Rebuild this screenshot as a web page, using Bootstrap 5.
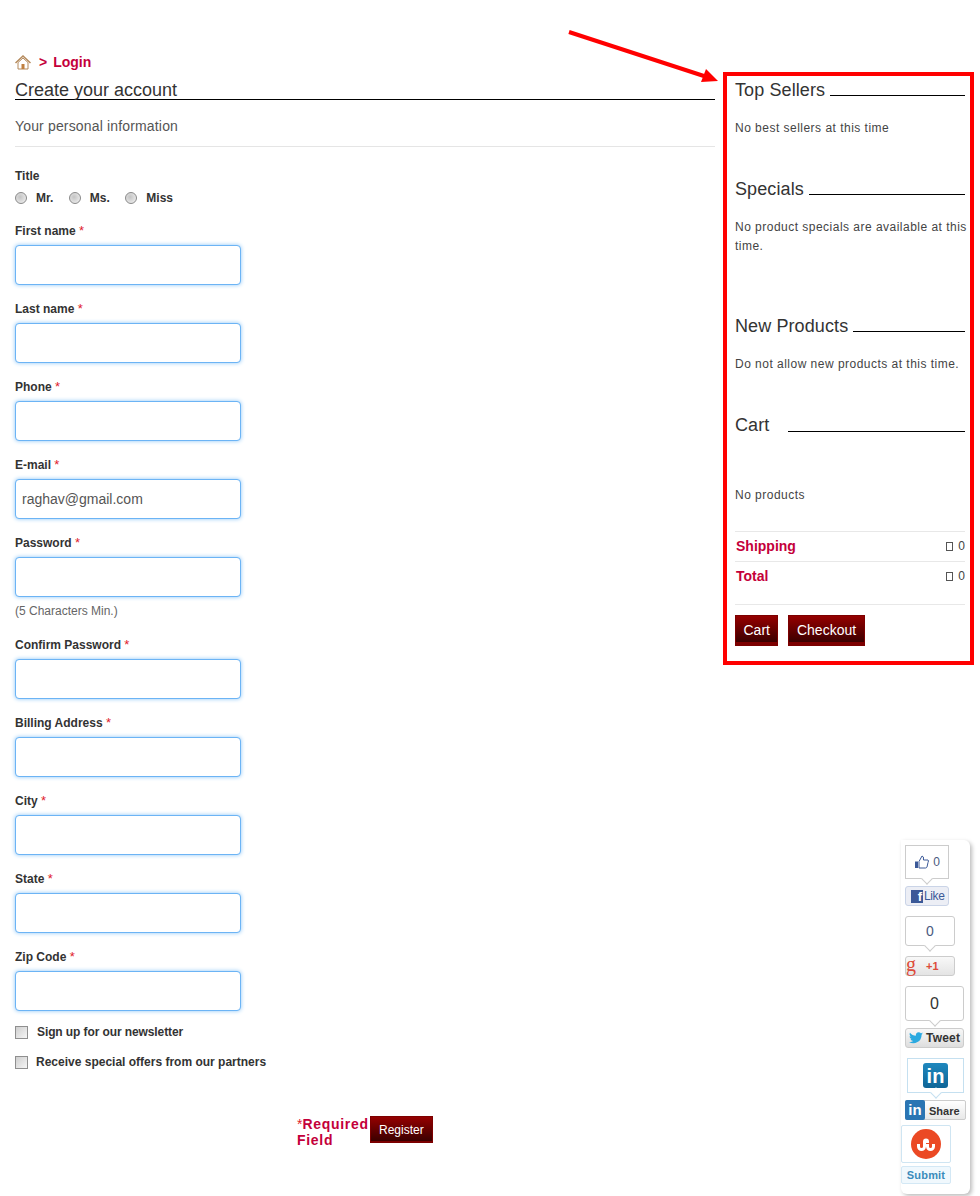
<!DOCTYPE html>
<html lang="en">
<head>
    <meta charset="UTF-8">
    <title>Create your account</title>
    <link rel="stylesheet" href="https://cdn.jsdelivr.net/npm/bootstrap@5.3.0/dist/css/bootstrap.min.css">
    <style>
        body { font-family: "Liberation Sans", Arial, sans-serif; font-size: 12px; color: #333; background: #fff; }
        .page-wrap { padding: 52px 6px 0 15px; width: 980px; }
        .main-col { width: 700px; margin-right: 8px; }

        .crumb { height: 20px; color: #c4003a; font-size: 14px; font-weight: 700; line-height: 20px; }
        .crumb svg { margin-right: 8px; }
        .crumb b { margin-right: 6px; }
        .page-title { font-size: 18px; font-weight: 400; line-height: 22px; padding-top: 7px; margin: 0; border-bottom: 1px solid #000; box-sizing: content-box; height: 20px; }
        .sub-title { font-size: 14px; font-weight: 400; letter-spacing: .16px; color: #555; line-height: 20px; margin: 0; padding: 16px 0 10px; border-bottom: 1px solid #e5e5e5; height: 47px; }

        .fld-label { display: block; font-weight: 700; font-size: 12px; line-height: 16px; padding-top: 1px; margin: 0 0 6px; color: #333; }
        .req { color: #e0202a; font-weight: 400; font-size: 13px; }
        .fld { margin-bottom: 15px; height: 63px; }
        .fld .form-control { width: 226px; height: 40px; border: 1px solid #6cb4f5; border-radius: 4px; box-shadow: 0 0 4px #8cc6f7; padding: 0 6px; font-size: 14px; color: #555; font-family: inherit; }
        .fld-hint { color: #666; font-size: 12px; line-height: 16px; margin: -16px 0 0; height: 40px; padding-top: 7px; }

        .title-row { padding-top: 21px; height: 75px; }
        .title-row .fld-label { padding-top: 0; margin-bottom: 6px; }
        .radio-line { color: #333; font-weight: 700; line-height: 16px; }
        .radio-line .form-check-input, .check-line .form-check-input { appearance: none; margin: 0; float: none; }
        .radio-line .form-check-input { width: 12px; height: 12px; border-radius: 50%; border: 1px solid #8a8a8a; background: radial-gradient(circle at 40% 40%, #c4c4c4 0, #dcdcdc 50%, #f6f6f6 100%); }
        .radio-line label { margin: 0 15.5px 0 9px; }
        .check-line { height: 30px; font-weight: 700; line-height: 16px; }
        .check-line .form-check-input { width: 13px; height: 13px; border-radius: 0; border: 1px solid #8f8f8f; background: linear-gradient(135deg, #cfcfcf, #f6f6f6); margin-right: 8px; }
        .check-line label { margin: 0; }
        .check-first { margin-top: -9px; }
        .check-first label { padding-left: 1px; letter-spacing: -.1px; }

        .submit-line { margin-top: 39px; padding-left: 282px; }
        .req-note { width: 73px; color: #c4003a; font-size: 14px; font-weight: 700; line-height: 16px; letter-spacing: .7px; }
        .req-note i { color: #e0202a; font-style: normal; font-weight: 400; letter-spacing: 0; }

        .btn-dark-red { border: 1px solid #7c0000; border-bottom: 4px solid #7c0000; border-radius: 0; background: linear-gradient(#950000, #3a0000); color: #fff; font-size: 14px; line-height: 16px; padding: 6px 7.5px 4px; }
        .btn-dark-red:hover { color: #fff; background: #7c0000; }
        .btn-reg { font-size: 12px; padding: 5px 8px 4px; height: 27px; border-bottom-width: 2px; }

        .side-box { width: 251px; height: 593px; margin-top: 20px; border: 4px solid #f00; padding: 3px 5px 0 8px; }
        .side-h { display: flex; align-items: flex-end; font-size: 18px; font-weight: 400; letter-spacing: .1px; line-height: 22px; margin: 0; color: #333; }
        .side-h::after { content: ""; flex: 1; border-bottom: 1px solid #000; margin: 0 0 5px 5px; }
        .side-h.wide-gap::after { margin: 0 0 4px 19px; }
        .side-p { font-size: 12px; line-height: 19px; letter-spacing: .48px; color: #444; margin: 0 -4px 0 0; }
        .side-gap-1 { margin-top: 18px; }
        .side-h.side-gap-2 { margin-top: 40px; }
        .side-h.side-gap-3 { margin-top: 59px; }
        .side-p.side-gap-4 { margin-top: 50px; margin-bottom: 26px; }
        .side-actions { gap: 10px; border-top: 1px solid #e8e8e8; margin-top: 13px; padding-top: 10px; }
        .tot-row { height: 30px; border-top: 1px solid #e8e8e8; line-height: 29px; color: #444; }
        .tot-row b { color: #c4003a; font-size: 14px; padding-left: 1px; }
        .tofu { display: inline-block; width: 7px; height: 9px; border: 1px solid #555; margin-right: 5px; vertical-align: -1px; }

        .share-box { position: absolute; left: 901px; top: 840px; width: 69px; height: 354px; background: #fff; border-radius: 0 6px 6px 6px; box-shadow: 2px 2px 4px #bbb; font-family: "Liberation Sans", Arial, sans-serif; }
        .cnt { position: relative; background: #fff; border: 1px solid #ccc; color: #4a5a80; display: flex; align-items: center; justify-content: center; }
        .cnt::after { content: ""; position: absolute; left: 50%; bottom: -5px; width: 8px; height: 8px; margin-left: -4px; background: #fff; border-right: 1px solid #ccc; border-bottom: 1px solid #ccc; transform: rotate(45deg); }
        .cnt-fb { margin: 5px 0 0 4px; width: 44px; height: 34px; font-size: 12px; }
        .btn-fb { margin: 7px 0 0 4px; width: 44px; height: 20px; background: #eceef5; border: 1px solid #cad4e7; border-radius: 3px; color: #3b5998; font-size: 12px; letter-spacing: -.4px; padding-left: 5px; gap: 1px; }
        .fb-logo { flex: none; width: 12px; height: 13px; background: #3b5998; color: #fff; font-weight: 700; font-size: 13px; line-height: 14px; letter-spacing: 0; text-align: right; padding-right: 1px; }
        .cnt-g { margin: 10px 0 0 4px; width: 50px; height: 30px; border-radius: 3px; font-size: 14px; }
        .btn-g { margin: 10px 0 0 4px; width: 50px; height: 20px; border: 1px solid #ccc; border-radius: 3px; background: linear-gradient(#f8f8f8, #e4e4e4); color: #dd4b39; font-size: 11px; font-weight: 700; }
        .g-logo { font-family: "Liberation Serif", serif; font-weight: 400; font-size: 20px; line-height: 16px; width: 16px; margin-top: -4px; }
        .cnt-tw { margin: 10px 0 0 4px; width: 59px; height: 35px; border-radius: 3px; font-size: 16px; color: #333; }
        .btn-tw { margin: 7px 0 0 4px; width: 59px; height: 20px; border: 1px solid #ccc; border-radius: 3px; background: linear-gradient(#f8f8f8, #dedede); color: #333; font-size: 12px; letter-spacing: .2px; font-weight: 700; gap: 3px; padding-left: 3px; }
        .cnt-li { margin: 10px 0 0 6px; width: 57px; height: 35px; border-color: #c5e0f0; }
        .cnt-li::after { border-color: #c5e0f0; }
        .li-logo { width: 25px; height: 25px; border-radius: 3px; background: linear-gradient(#1f88be, #0e6597); color: #fff; font-weight: 700; font-size: 20px; line-height: 26px; text-align: center; }
        .btn-li { margin: 7px 0 0 4px; width: 61px; height: 20px; border: 1px solid #ccc; border-radius: 2px; background: linear-gradient(#fff, #e8e8e8); color: #333; font-size: 11px; font-weight: 700; padding-top: 2px; }
        .btn-li .li-logo { width: 20px; height: 20px; font-size: 15px; line-height: 20px; border-radius: 2px; margin: -3px 4px -1px -1px; background: #2a75b3; flex: none; }
        .cnt-su { margin: 5px 0 0 0; width: 50px; height: 38px; border: 1px solid #cfe5f2; border-radius: 2px; }
        .cnt-su::after { display: none; }
        .su-logo { width: 30px; height: 30px; }
        .btn-su { margin: 3px 0 0 0; width: 50px; height: 18px; border: 1px solid #d3e8f5; border-radius: 2px; background: #f0f8fd; color: #3a8bbb; font-size: 11px; font-weight: 700; justify-content: center; letter-spacing: .2px; }
        .arrow-layer { position: absolute; left: 560px; top: 20px; }
    </style>
</head>
<body>

<svg class="arrow-layer" width="170" height="70" viewBox="0 0 170 70">
    <line x1="9" y1="12" x2="150" y2="58" stroke="#f00" stroke-width="4"/>
    <polygon points="158,61 141,62 146,49" fill="#f00"/>
</svg>

<div class="page-wrap d-flex align-items-start">
    <div class="main-col">
        <div class="crumb d-flex align-items-center">
            <svg width="16" height="15" viewBox="0 0 16 15">
                <path d="M0.5 8 L8 1 L15.5 8" fill="none" stroke="#b58a5c" stroke-width="1.5"/>
                <path d="M3 7.5 V14 H13 V7.5 L8 3 Z" fill="#fff" stroke="#b58a5c"/>
                <rect x="6.5" y="9" width="3" height="5" fill="#c08040"/>
            </svg>
            <b>&gt;</b> Login
        </div>
        <h1 class="page-title">Create your account</h1>
        <h2 class="sub-title">Your personal information</h2>

        <form>
            <div class="title-row">
                <label class="fld-label">Title</label>
                <div class="radio-line d-flex align-items-center">
                    <input class="form-check-input" type="radio" name="gender" id="mr"><label for="mr">Mr.</label>
                    <input class="form-check-input" type="radio" name="gender" id="ms"><label for="ms">Ms.</label>
                    <input class="form-check-input" type="radio" name="gender" id="miss"><label for="miss">Miss</label>
                </div>
            </div>

            <div class="fld"><label class="fld-label">First name <span class="req">*</span></label><input type="text" class="form-control"></div>
            <div class="fld"><label class="fld-label">Last name <span class="req">*</span></label><input type="text" class="form-control"></div>
            <div class="fld"><label class="fld-label">Phone <span class="req">*</span></label><input type="text" class="form-control"></div>
            <div class="fld"><label class="fld-label">E-mail <span class="req">*</span></label><input type="text" class="form-control" value="raghav@gmail.com"></div>
            <div class="fld"><label class="fld-label">Password <span class="req">*</span></label><input type="password" class="form-control"></div>
            <p class="fld-hint">(5 Characters Min.)</p>
            <div class="fld"><label class="fld-label">Confirm Password <span class="req">*</span></label><input type="password" class="form-control"></div>
            <div class="fld"><label class="fld-label">Billing Address <span class="req">*</span></label><input type="text" class="form-control"></div>
            <div class="fld"><label class="fld-label">City <span class="req">*</span></label><input type="text" class="form-control"></div>
            <div class="fld"><label class="fld-label">State <span class="req">*</span></label><input type="text" class="form-control"></div>
            <div class="fld"><label class="fld-label">Zip Code <span class="req">*</span></label><input type="text" class="form-control"></div>

            <div class="check-line check-first d-flex align-items-center"><input class="form-check-input" type="checkbox" id="news"><label for="news">Sign up for our newsletter</label></div>
            <div class="check-line d-flex align-items-center"><input class="form-check-input" type="checkbox" id="partners"><label for="partners">Receive special offers from our partners</label></div>

            <div class="submit-line d-flex align-items-start">
                <div class="req-note"><i>*</i>Required Field</div>
                <button type="button" class="btn btn-dark-red btn-reg">Register</button>
            </div>
        </form>
    </div>

    <aside class="side-box">
        <h3 class="side-h">Top Sellers</h3>
        <p class="side-p side-gap-1">No best sellers at this time</p>
        <h3 class="side-h side-gap-2">Specials</h3>
        <p class="side-p side-gap-1">No product specials are available at this time.</p>
        <h3 class="side-h side-gap-3">New Products</h3>
        <p class="side-p side-gap-1">Do not allow new products at this time.</p>
        <h3 class="side-h wide-gap side-gap-2">Cart</h3>
        <p class="side-p side-gap-4">No products</p>
        <div class="tot-row d-flex justify-content-between"><b>Shipping</b><span><i class="tofu"></i>0</span></div>
        <div class="tot-row d-flex justify-content-between"><b>Total</b><span><i class="tofu"></i>0</span></div>
        <div class="side-actions d-flex">
            <button type="button" class="btn btn-dark-red">Cart</button>
            <button type="button" class="btn btn-dark-red">Checkout</button>
        </div>
    </aside>
</div>

<div class="share-box d-flex flex-column align-items-start">
    <div class="cnt cnt-fb">
        <svg width="16" height="14" viewBox="0 0 16 14"><path d="M1 6.5 H4 V13 H1 Z" fill="#3b5998"/><path d="M5 6.5 L8 1 Q10 1 9.5 5 H14 Q15 5.5 14 7.5 L13 12 Q12.5 13 11.5 13 H5 Z" fill="#fff" stroke="#3b5998"/></svg>
        <span>&nbsp;0</span>
    </div>
    <div class="btn-fb d-flex align-items-center"><span class="fb-logo">f</span>Like</div>
    <div class="cnt cnt-g">0</div>
    <div class="btn-g d-flex align-items-center"><span class="g-logo">g</span><span class="ms-1">+1</span></div>
    <div class="cnt cnt-tw">0</div>
    <div class="btn-tw d-flex align-items-center">
        <svg width="14" height="12" viewBox="0 0 24 20"><path d="M24 2.4c-.9.4-1.8.7-2.8.8 1-.6 1.8-1.500 2.200-2.700-.9.6-2 1-3.100 1.200A4.900 4.900 0 0 0 11.900 6.100C7.800 5.900 4.200 3.900 1.700.9c-1.300 2.200-.6 5.100 1.500 6.500-.8 0-1.600-.2-2.200-.6 0 2.300 1.600 4.400 3.900 4.900-.7.2-1.500.2-2.200.1.600 2 2.400 3.400 4.600 3.400A9.900 9.900 0 0 1 0 16.700 14 14 0 0 0 21.500 4.300c1-.7 1.800-1 2.500-1.900z" fill="#2aa9e0"/></svg>
        Tweet
    </div>
    <div class="cnt cnt-li"><span class="li-logo">in</span></div>
    <div class="btn-li d-flex align-items-center"><span class="li-logo">in</span>Share</div>
    <div class="cnt cnt-su">
        <svg class="su-logo" viewBox="0 0 30 30">
            <circle cx="15" cy="15" r="15" fill="#eb4924"/>
            <path d="M7.500 15 V17.500 A3 3 0 0 0 13.500 17.500 V12.500 A1.500 1.500 0 0 1 16.500 12.500 V14 M16.500 15 V17.500 A3 3 0 0 0 22.500 17.500 V15" fill="none" stroke="#fff" stroke-width="3"/>
        </svg>
    </div>
    <div class="btn-su d-flex align-items-center">Submit</div>
</div>

<script src="https://cdn.jsdelivr.net/npm/bootstrap@5.3.0/dist/js/bootstrap.bundle.min.js"></script>
</body>
</html>
